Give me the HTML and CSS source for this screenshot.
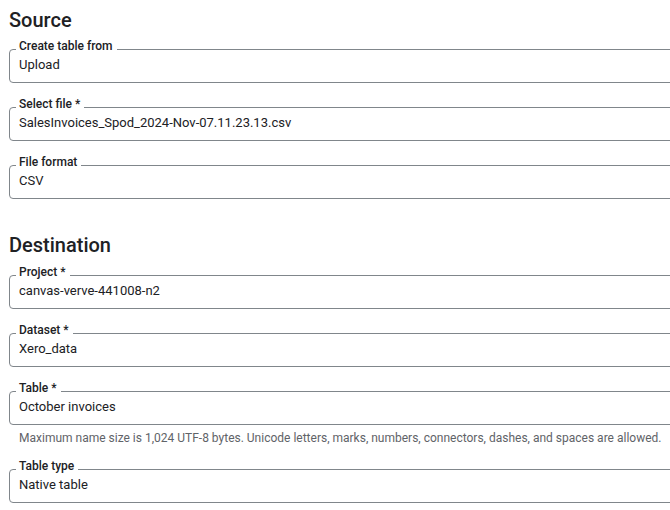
FILE: index.html
```html
<!DOCTYPE html>
<html lang="en">
<head>
    <meta charset="UTF-8">
    <meta name="viewport" content="width=device-width, initial-scale=1.0">
    <title>Create table</title>
    <link rel="stylesheet" href="styles.css">
</head>
<body>
    <div id="form">
        <h2 class="section-title">Source</h2>
        <fieldset class="field">
            <legend>Create table from</legend>
            <div class="value">Upload</div>
        </fieldset>
        <fieldset class="field">
            <legend>Select file *</legend>
            <div class="value">SalesInvoices_Spod_2024-Nov-07.11.23.13.csv</div>
        </fieldset>
        <fieldset class="field">
            <legend>File format</legend>
            <div class="value">CSV</div>
        </fieldset>

        <h2 class="section-title dest">Destination</h2>
        <fieldset class="field">
            <legend>Project *</legend>
            <div class="value">canvas-verve-441008-n2</div>
        </fieldset>
        <fieldset class="field">
            <legend>Dataset *</legend>
            <div class="value">Xero_data</div>
        </fieldset>
        <fieldset class="field">
            <legend>Table *</legend>
            <div class="value">October invoices</div>
        </fieldset>
        <div class="hint">Maximum name size is 1,024 UTF-8 bytes. Unicode letters, marks, numbers, connectors, dashes, and spaces are allowed.</div>
        <fieldset class="field">
            <legend>Table type</legend>
            <div class="value">Native table</div>
        </fieldset>
    </div>
</body>
</html>
```

FILE: styles.css
```css
/* outlined form fields, cut off on the right like the console panel */
body {
    margin: 0;
    font-family: Roboto, "Liberation Sans", Arial, sans-serif;
    color: #202124;
    background: #fff;
    overflow: hidden;
}
#form {
    padding-left: 9px;
    margin-right: -40px;
}
.section-title {
    margin: 8px 0 7px;
    font-size: 20px;
    line-height: 24px;
    font-weight: 500;
}
.section-title.dest {
    margin-top: 34px;
    margin-bottom: 8px;
}
.field {
    margin: 0 0 14px;
    padding: 0 9px 9px;
    border: 1px solid #80868b;
    border-radius: 4px;
    min-width: 0;
}
.field legend {
    margin-left: -3px;
    padding: 0 4px 6px 3px;
    font-size: 12px;
    line-height: 14px;
    font-weight: 500;
    color: #202124;
}
.value {
    margin-top: -2px;
    font-size: 13px;
    line-height: 16px;
}
.hint {
    margin: -8px 0 14px 10px;
    font-size: 12px;
    line-height: 14px;
    color: #5f6368;
}
```
